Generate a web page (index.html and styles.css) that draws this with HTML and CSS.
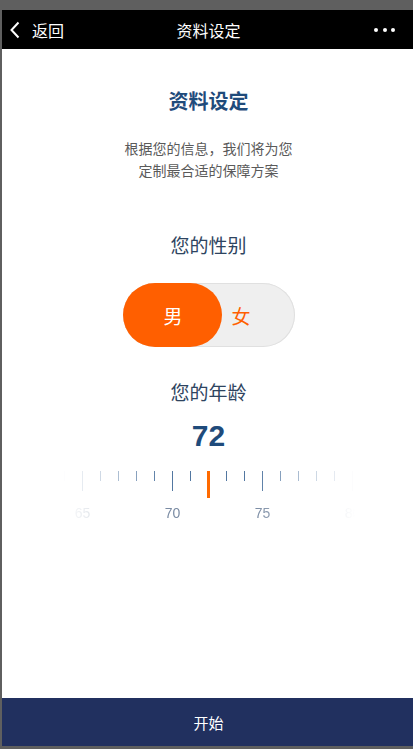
FILE: index.html
```html
<!DOCTYPE html>
<html lang="zh">
<head>
<meta charset="utf-8">
<title>资料设定</title>
<link rel="stylesheet" href="styles.css">
</head>
<body>
<div class="app">
  <header class="topbar">
    <div class="back">
      <svg class="chev" width="10" height="18" viewBox="0 0 10 18"><path d="M8.5 1.5 L1.5 9 L8.5 16.5" stroke="#fff" stroke-width="2" fill="none" stroke-linecap="butt"/></svg>
      <span>返回</span>
    </div>
    <div class="title">资料设定</div>
    <div class="more"><i></i><i></i><i></i></div>
  </header>
  <main class="content">
    <h1 class="heading">资料设定</h1>
    <p class="sub">根据您的信息，我们将为您<br>定制最合适的保障方案</p>
    <h2 class="q q-gender">您的性别</h2>
    <div class="toggle">
      <span class="opt on">男</span>
      <span class="opt off">女</span>
    </div>
    <h2 class="q q-age">您的年龄</h2>
    <div class="age">72</div>
    <div class="ruler">
      <div class="track">
        <div class="slot"><i class="tick"></i></div>
        <div class="slot"><i class="tick major"></i><span class="lbl">65</span></div>
        <div class="slot"><i class="tick"></i></div>
        <div class="slot"><i class="tick"></i></div>
        <div class="slot"><i class="tick"></i></div>
        <div class="slot"><i class="tick"></i></div>
        <div class="slot"><i class="tick major"></i><span class="lbl">70</span></div>
        <div class="slot"><i class="tick"></i></div>
        <div class="slot"><i class="tick sel"></i></div>
        <div class="slot"><i class="tick"></i></div>
        <div class="slot"><i class="tick"></i></div>
        <div class="slot"><i class="tick major"></i><span class="lbl">75</span></div>
        <div class="slot"><i class="tick"></i></div>
        <div class="slot"><i class="tick"></i></div>
        <div class="slot"><i class="tick"></i></div>
        <div class="slot"><i class="tick"></i></div>
        <div class="slot"><i class="tick major"></i><span class="lbl">80</span></div>
      </div>
    </div>
  </main>
  <footer class="start">开始</footer>
</div>
</body>
</html>
```
FILE: styles.css
```css
html {
  background: #5f5f5f;
  overflow: hidden;
}
body {
  margin: 0;
  padding: 10px 0 3px 2px;
  overflow: hidden;
  font-family: "Noto Sans CJK SC", "Liberation Sans", sans-serif;
}
.app {
  width: 413px;
  height: 736px;
  background: #fff;
  display: flex;
  flex-direction: column;
}
.topbar {
  height: 39px;
  background: #000;
  color: #fff;
  display: grid;
  grid-template-columns: 1fr auto 1fr;
  align-items: center;
  flex: none;
}
.back {
  display: flex;
  align-items: center;
  padding-left: 8px;
  font-size: 16px;
  line-height: 20px;
}
.chev {
  display: block;
  margin-right: 12px;
}
.title {
  font-size: 16px;
  line-height: 20px;
}
.more {
  display: flex;
  justify-content: flex-end;
  gap: 4.5px;
  padding-right: 20px;
}
.more i {
  width: 4px;
  height: 4px;
  border-radius: 50%;
  background: #fff;
}
.content {
  flex: 1;
  display: flex;
  flex-direction: column;
  align-items: center;
}
.heading {
  margin: 38px 0 0;
  font-size: 20px;
  line-height: 28px;
  font-weight: 700;
  color: #1f4b7b;
}
.sub {
  margin: 22px 0 0;
  font-size: 14px;
  line-height: 22px;
  color: #5a5a5a;
  text-align: center;
}
.q {
  margin: 0;
  font-size: 19px;
  line-height: 26px;
  font-weight: 400;
  color: #2e4460;
}
.q-gender { margin-top: 51px; }
.q-age { margin-top: 32px; }
.toggle {
  margin-top: 25px;
  width: 172px;
  height: 64px;
  border-radius: 32px;
  background: #efefef;
  box-shadow: inset 0 0 0 1px #e0e0e0;
  display: flex;
  align-items: stretch;
  font-size: 19px;
}
.opt {
  display: flex;
  align-items: center;
}
.opt.on {
  width: 99px;
  justify-content: center;
  border-radius: 32px;
  background: #ff5f00;
  color: #fff;
  padding-left: 2px;
  box-sizing: border-box;
}
.opt.off {
  padding-left: 10px;
  color: #ff5f00;
}
.age {
  margin-top: 13px;
  font-family: "Liberation Sans", Arial, sans-serif;
  font-weight: 700;
  font-size: 30px;
  line-height: 36px;
  color: #1f4b7b;
}
.ruler {
  margin-top: 17px;
  width: 292px;
  overflow: hidden;
  -webkit-mask-image: linear-gradient(to right, transparent 0%, rgba(0,0,0,0.3) 14%, #000 34%, #000 66%, rgba(0,0,0,0.3) 86%, transparent 100%);
  mask-image: linear-gradient(to right, transparent 0%, rgba(0,0,0,0.3) 14%, #000 34%, #000 66%, rgba(0,0,0,0.3) 86%, transparent 100%);
}
.track {
  display: flex;
  justify-content: center;
}
.slot {
  flex: none;
  width: 18px;
  height: 50px;
  display: flex;
  flex-direction: column;
  align-items: center;
}
.tick {
  display: block;
  width: 1px;
  height: 10px;
  background: #5277a1;
}
.tick.major {
  height: 20px;
}
.tick.sel {
  width: 3px;
  height: 27px;
  background: #ff6a00;
}
.lbl {
  margin-top: 14px;
  font-family: "Liberation Sans", Arial, sans-serif;
  font-size: 14px;
  line-height: 16px;
  color: #7a8ba3;
  white-space: nowrap;
}
.start {
  flex: none;
  height: 48px;
  background: #21305f;
  color: #fff;
  font-size: 15px;
  display: flex;
  align-items: center;
  justify-content: center;
}
```
